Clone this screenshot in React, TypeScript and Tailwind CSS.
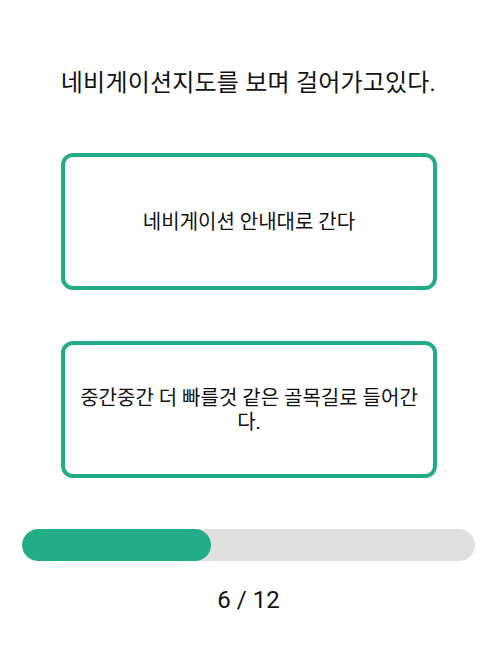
import React from "react";

const options = [
  "네비게이션 안내대로 간다",
  "중간중간 더 빠를것 같은 골목길로 들어간다.",
];

export default function App() {
  const current = 6;
  const total = 12;
  const progress = ((current - 1) / total) * 100;

  return (
    <div className="w-[500px] h-[646px] bg-white font-['Roboto','Noto_Sans_CJK_KR',sans-serif] text-[#111]">
      <div className="flex flex-col pl-[22px] pr-[25px]">
        <h1 className="mt-[67px] text-center text-[24px] leading-[32px] font-normal tracking-[0.2px]">
          네비게이션지도를 보며 걸어가고있다.
        </h1>

        <div className="mt-[54px] flex flex-col gap-[51px] ml-[39px] mr-[38px]">
          {options.map((text) => (
            <button
              key={text}
              className="h-[137px] rounded-[12px] border-4 border-[#22ab87] bg-white px-[12px] flex items-center justify-center text-center text-[20px] leading-[24px] text-[#111]"
            >
              {text}
            </button>
          ))}
        </div>

        <div className="mt-[51px] h-[32px] w-full rounded-full bg-[#e0e0de] overflow-hidden">
          <div
            className="h-full rounded-full bg-[#22ad88]"
            style={{ width: `${progress}%` }}
          />
        </div>

        <div className="mt-[23px] text-center text-[24px] leading-[32px]">
          {current} / {total}
        </div>
      </div>
    </div>
  );
}
